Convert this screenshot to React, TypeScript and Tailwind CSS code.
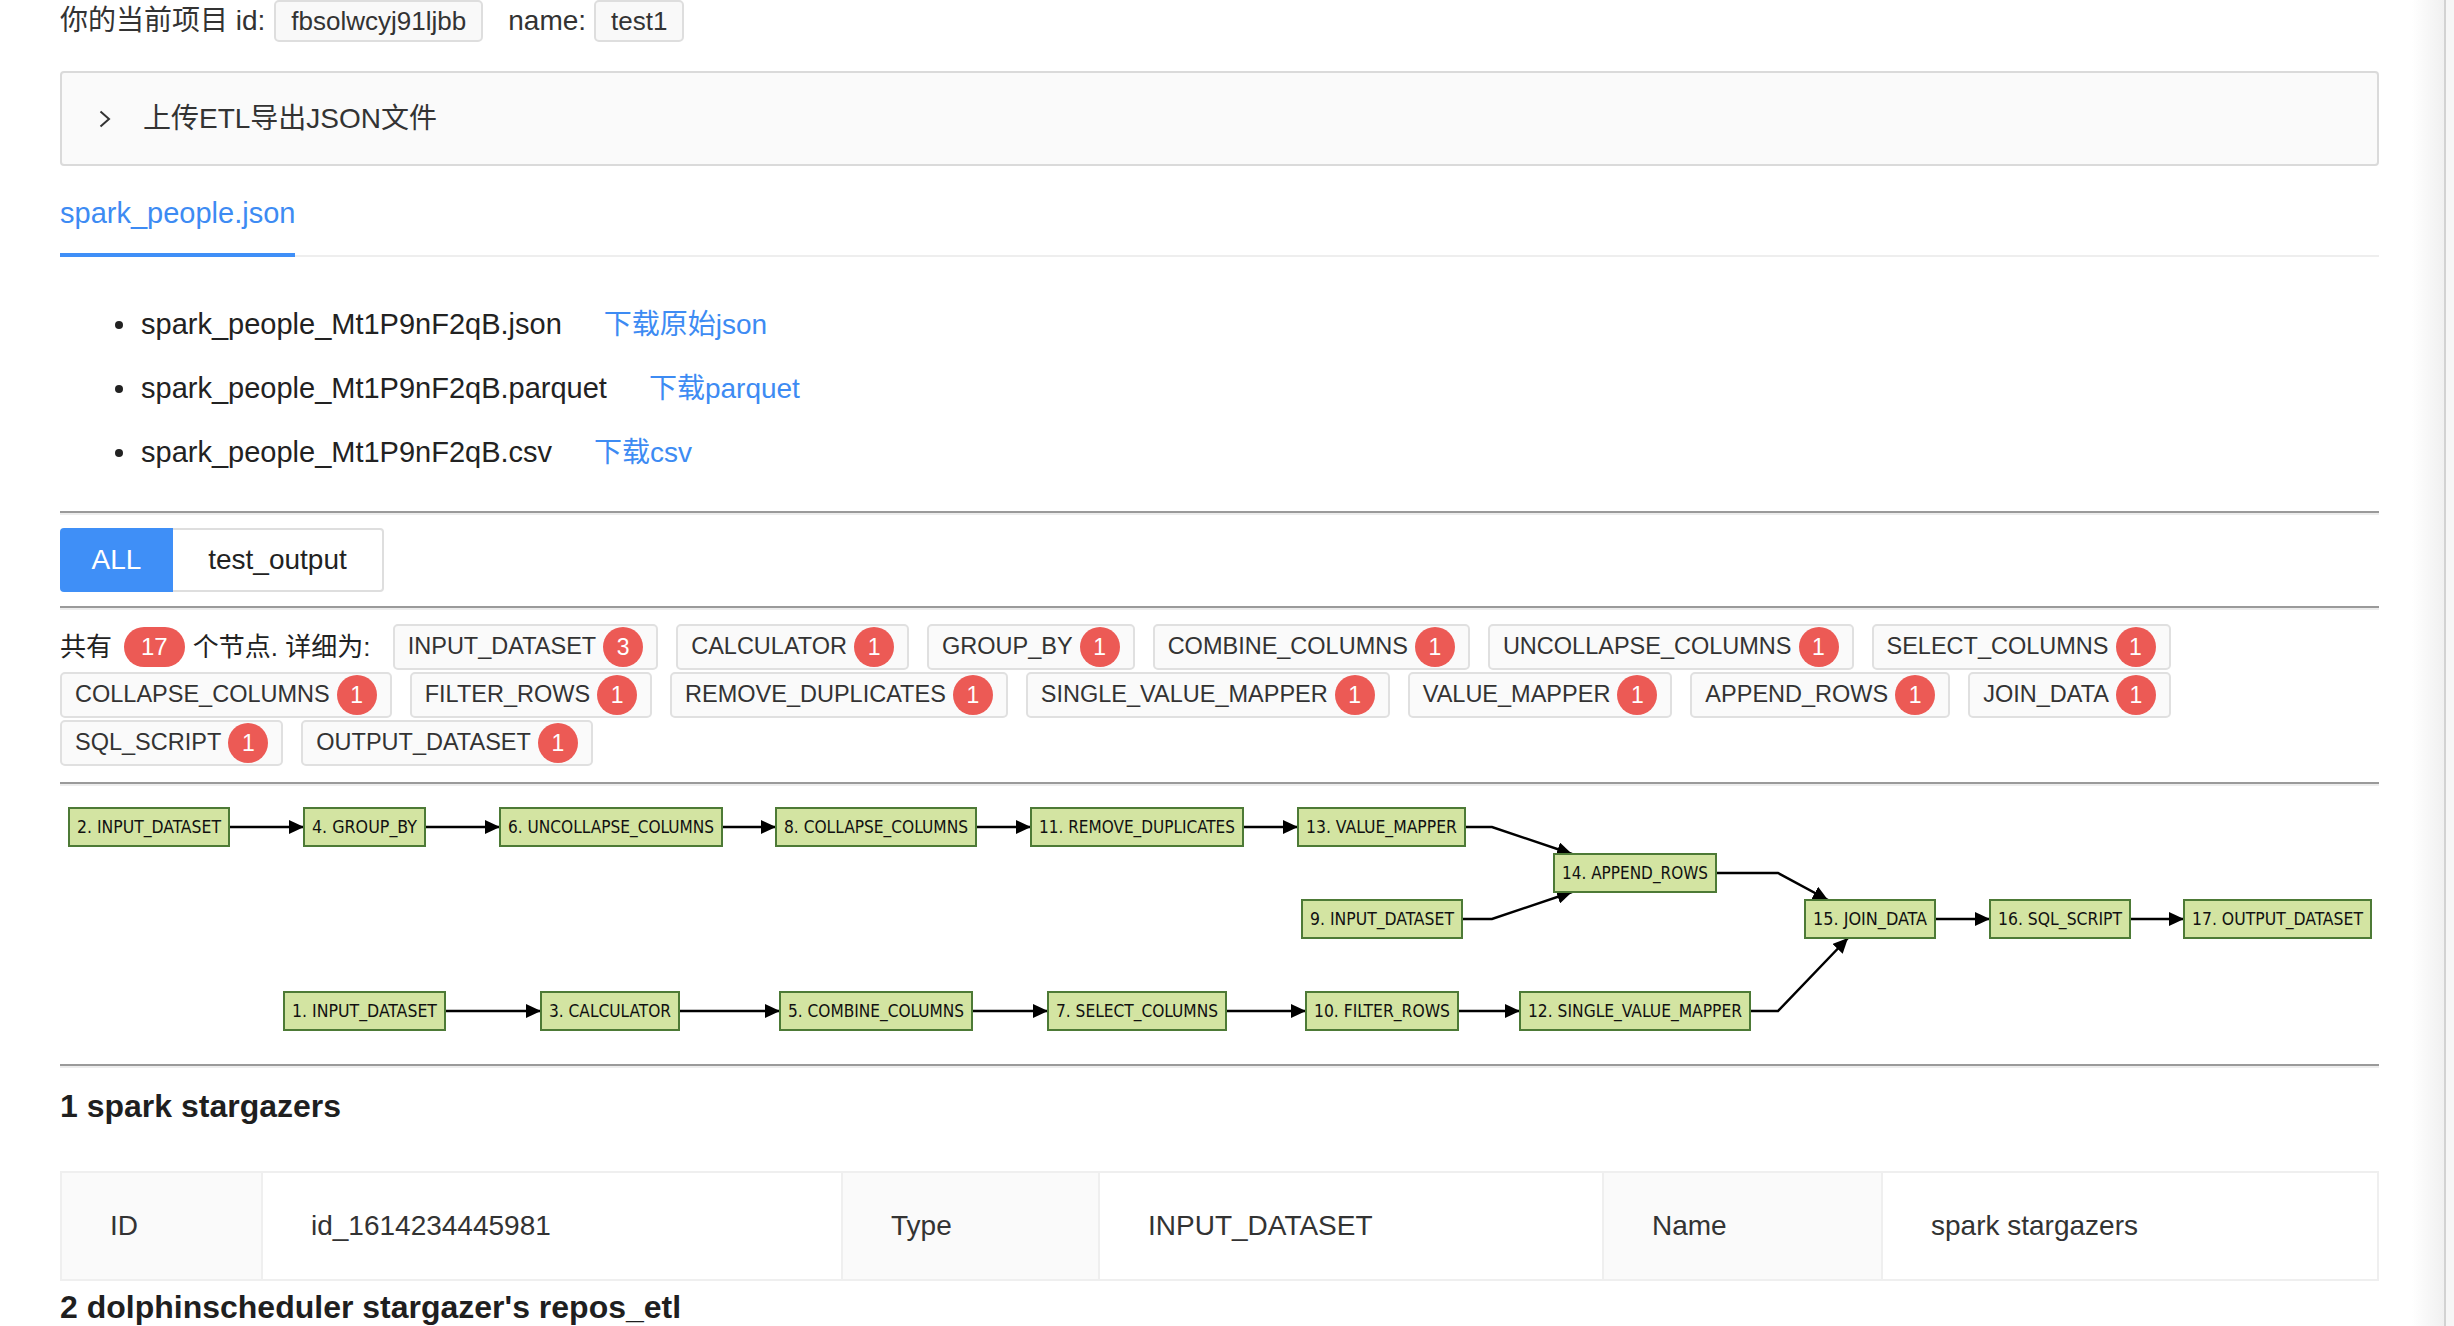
import React from "react";

type Node = { id: string; label: string; x: number; y: number; w: number };

const nodes: Node[] = [
  { id: "n2", label: "2. INPUT_DATASET", x: 9, y: 22, w: 160 },
  { id: "n4", label: "4. GROUP_BY", x: 244, y: 22, w: 121 },
  { id: "n6", label: "6. UNCOLLAPSE_COLUMNS", x: 440, y: 22, w: 222 },
  { id: "n8", label: "8. COLLAPSE_COLUMNS", x: 716, y: 22, w: 200 },
  { id: "n11", label: "11. REMOVE_DUPLICATES", x: 971, y: 22, w: 212 },
  { id: "n13", label: "13. VALUE_MAPPER", x: 1238, y: 22, w: 167 },
  { id: "n14", label: "14. APPEND_ROWS", x: 1494, y: 68, w: 162 },
  { id: "n9", label: "9. INPUT_DATASET", x: 1242, y: 114, w: 160 },
  { id: "n15", label: "15. JOIN_DATA", x: 1745, y: 114, w: 130 },
  { id: "n16", label: "16. SQL_SCRIPT", x: 1930, y: 114, w: 140 },
  { id: "n17", label: "17. OUTPUT_DATASET", x: 2124, y: 114, w: 187 },
  { id: "n1", label: "1. INPUT_DATASET", x: 224, y: 206, w: 161 },
  { id: "n3", label: "3. CALCULATOR", x: 481, y: 206, w: 138 },
  { id: "n5", label: "5. COMBINE_COLUMNS", x: 720, y: 206, w: 192 },
  { id: "n7", label: "7. SELECT_COLUMNS", x: 988, y: 206, w: 178 },
  { id: "n10", label: "10. FILTER_ROWS", x: 1246, y: 206, w: 152 },
  { id: "n12", label: "12. SINGLE_VALUE_MAPPER", x: 1460, y: 206, w: 230 },
];

const edges: string[] = [
  "M169,41 L244,41",
  "M365,41 L440,41",
  "M662,41 L716,41",
  "M916,41 L971,41",
  "M1183,41 L1238,41",
  "M1405,41 L1432,41 L1512,68",
  "M1402,133 L1432,133 L1512,106",
  "M1656,87 L1718,87 L1768,114",
  "M1690,225 L1718,225 L1788,152",
  "M1875,133 L1930,133",
  "M2070,133 L2124,133",
  "M385,225 L481,225",
  "M619,225 L720,225",
  "M912,225 L988,225",
  "M1166,225 L1246,225",
  "M1398,225 L1460,225",
];

const rows: [string, number][][] = [
  [
    ["INPUT_DATASET", 3],
    ["CALCULATOR", 1],
    ["GROUP_BY", 1],
    ["COMBINE_COLUMNS", 1],
    ["UNCOLLAPSE_COLUMNS", 1],
    ["SELECT_COLUMNS", 1],
  ],
  [
    ["COLLAPSE_COLUMNS", 1],
    ["FILTER_ROWS", 1],
    ["REMOVE_DUPLICATES", 1],
    ["SINGLE_VALUE_MAPPER", 1],
    ["VALUE_MAPPER", 1],
    ["APPEND_ROWS", 1],
    ["JOIN_DATA", 1],
  ],
  [
    ["SQL_SCRIPT", 1],
    ["OUTPUT_DATASET", 1],
  ],
];

const files = [
  { name: "spark_people_Mt1P9nF2qB.json", link: "下载原始json" },
  { name: "spark_people_Mt1P9nF2qB.parquet", link: "下载parquet" },
  { name: "spark_people_Mt1P9nF2qB.csv", link: "下载csv" },
];

function Divider() {
  return <div className="h-[2px] bg-[#9a9a9a] shadow-[0_2px_0_#ededed] mb-[2px]" />;
}

function Chip({ label, count }: { label: string; count: number }) {
  return (
    <div className="h-[46px] flex items-center pl-[13px] pr-[13px] border-2 border-[#e0e0e0] bg-[#fafafa] rounded-[5px] text-[23.5px] text-[#333]">
      <span>{label}</span>
      <span className="ml-[7px] w-[40px] h-[40px] rounded-full bg-[#ec5a55] text-white flex items-center justify-center text-[23px]">
        {count}
      </span>
    </div>
  );
}

function FlowGraph() {
  return (
    <svg width="2319" height="278" viewBox="0 0 2319 278">
      <defs>
        <marker
          id="arrow"
          markerUnits="userSpaceOnUse"
          markerWidth="16"
          markerHeight="14"
          refX="15"
          refY="7"
          orient="auto"
        >
          <path d="M0,0 L15,7 L0,14 z" fill="#000" />
        </marker>
      </defs>
      {edges.map((d) => (
        <path key={d} d={d} fill="none" stroke="#000" strokeWidth="2.5" markerEnd="url(#arrow)" />
      ))}
      {nodes.map((n) => (
        <g key={n.id}>
          <rect x={n.x} y={n.y} width={n.w} height={38} fill="#d3e4a2" stroke="#4d7a36" strokeWidth="2" />
          <text
            x={n.x + n.w / 2}
            y={n.y + 25}
            textAnchor="middle"
            fontSize="17"
            fontFamily="'DejaVu Sans Condensed', 'DejaVu Sans', sans-serif"
            fill="#111"
            textLength={n.w - 16}
            lengthAdjust="spacingAndGlyphs"
          >
            {n.label}
          </text>
        </g>
      ))}
    </svg>
  );
}

export default function App() {
  return (
    <div className="w-[2454px] h-[1326px] overflow-hidden flex bg-white text-[#333] font-['Liberation_Sans','Noto_Sans_CJK_SC',sans-serif]">
      <main className="w-[2412px] shrink-0 pl-[60px] pr-[33px]">
        {/* project info */}
        <div className="h-[42px] flex items-center text-[28px]">
          <span>你的当前项目 id:</span>
          <span className="ml-[9px] h-[42px] px-[15px] flex items-center border-2 border-[#dedede] bg-[#f9f9f9] rounded-[5px] text-[26px]">
            fbsolwcyj91ljbb
          </span>
          <span className="ml-[25px]">name:</span>
          <span className="ml-[8px] h-[42px] px-[15px] flex items-center border-2 border-[#dedede] bg-[#f9f9f9] rounded-[5px] text-[26px]">
            test1
          </span>
        </div>

        {/* upload collapse */}
        <div className="mt-[29px] h-[95px] flex items-center pl-[37px] border-2 border-[#dadada] bg-[#fafafa] rounded-[4px] text-[28px]">
          <svg width="12" height="18" viewBox="0 0 12 18">
            <polyline points="1.5,1.5 10,9 1.5,16.5" fill="none" stroke="#333" strokeWidth="2" />
          </svg>
          <span className="ml-[32px]">上传ETL导出JSON文件</span>
        </div>

        {/* file tab */}
        <div className="mt-[27px] flex border-b-2 border-[#eeeeee]">
          <div className="-mb-[2px] pb-[20px] border-b-4 border-[#3f8ff7] text-[29px] leading-[40px] text-[#3d8bf3]">
            spark_people.json
          </div>
        </div>

        <ul className="pt-[36px]">
          {files.map((f) => (
            <li key={f.name} className="h-[64px] flex items-center pl-[55px]">
              <span className="w-[8px] h-[8px] rounded-full bg-[#222]" />
              <span className="ml-[18px] text-[29px] text-[#222]">{f.name}</span>
              <span className="ml-[42px] text-[28px] text-[#3d8bf3]">{f.link}</span>
            </li>
          ))}
        </ul>

        <div className="mt-[26px]">
          <Divider />
        </div>

        {/* output tabs */}
        <div className="mt-[15px] flex h-[64px] text-[28px]">
          <div className="w-[113px] flex items-center justify-center bg-[#3f8ff7] text-white rounded-l-[4px]">ALL</div>
          <div className="w-[211px] flex items-center justify-center border-2 border-l-0 border-[#dedede] rounded-r-[4px] text-[#222]">
            test_output
          </div>
        </div>

        <div className="mt-[14px]">
          <Divider />
        </div>

        {/* node summary */}
        <div className="mt-[16px] flex flex-col gap-[2px]">
          {rows.map((row, i) => (
            <div key={i} className="flex items-center gap-[18px]">
              {i === 0 && (
                <div className="flex items-center text-[26px] text-[#222] -mr-[8px]">
                  <span>共有</span>
                  <span className="ml-[12px] h-[40px] px-[17px] rounded-full bg-[#ec5a55] text-white flex items-center text-[24px]">
                    17
                  </span>
                  <span className="ml-[8px] w-[190px] whitespace-nowrap">个节点. 详细为:</span>
                </div>
              )}
              {row.map(([label, count]) => (
                <Chip key={label} label={label} count={count} />
              ))}
            </div>
          ))}
        </div>

        <div className="mt-[16px]">
          <Divider />
        </div>

        <div className="h-[278px]">
          <FlowGraph />
        </div>

        <Divider />

        <h3 className="mt-[20px] text-[32px] leading-[40px] font-bold text-[#1f1f1f]">1 spark stargazers</h3>

        <div className="mt-[45px] h-[110px] flex border-2 border-[#efefef] text-[28px] text-[#333]">
          <div className="w-[199px] bg-[#fafafa] pl-[48px] flex items-center">ID</div>
          <div className="w-[580px] border-l-2 border-[#efefef] pl-[48px] flex items-center">id_1614234445981</div>
          <div className="w-[257px] border-l-2 border-[#efefef] bg-[#fafafa] pl-[48px] flex items-center">Type</div>
          <div className="w-[504px] border-l-2 border-[#efefef] pl-[48px] flex items-center">INPUT_DATASET</div>
          <div className="w-[279px] border-l-2 border-[#efefef] bg-[#fafafa] pl-[48px] flex items-center">Name</div>
          <div className="flex-1 border-l-2 border-[#efefef] pl-[48px] flex items-center">spark stargazers</div>
        </div>

        <h3 className="mt-[6px] text-[32px] leading-[40px] font-bold text-[#1f1f1f]">
          2 dolphinscheduler stargazer's repos_etl
        </h3>
      </main>

      {/* window scrollbar gutter */}
      <div className="flex-1 flex">
        <div className="w-[32px] bg-linear-to-r from-[#ffffff] to-[#f0f0f0]" />
        <div className="w-[2px] bg-[#d2d2d2]" />
        <div className="flex-1 bg-[#f6f6f6]" />
      </div>
    </div>
  );
}
